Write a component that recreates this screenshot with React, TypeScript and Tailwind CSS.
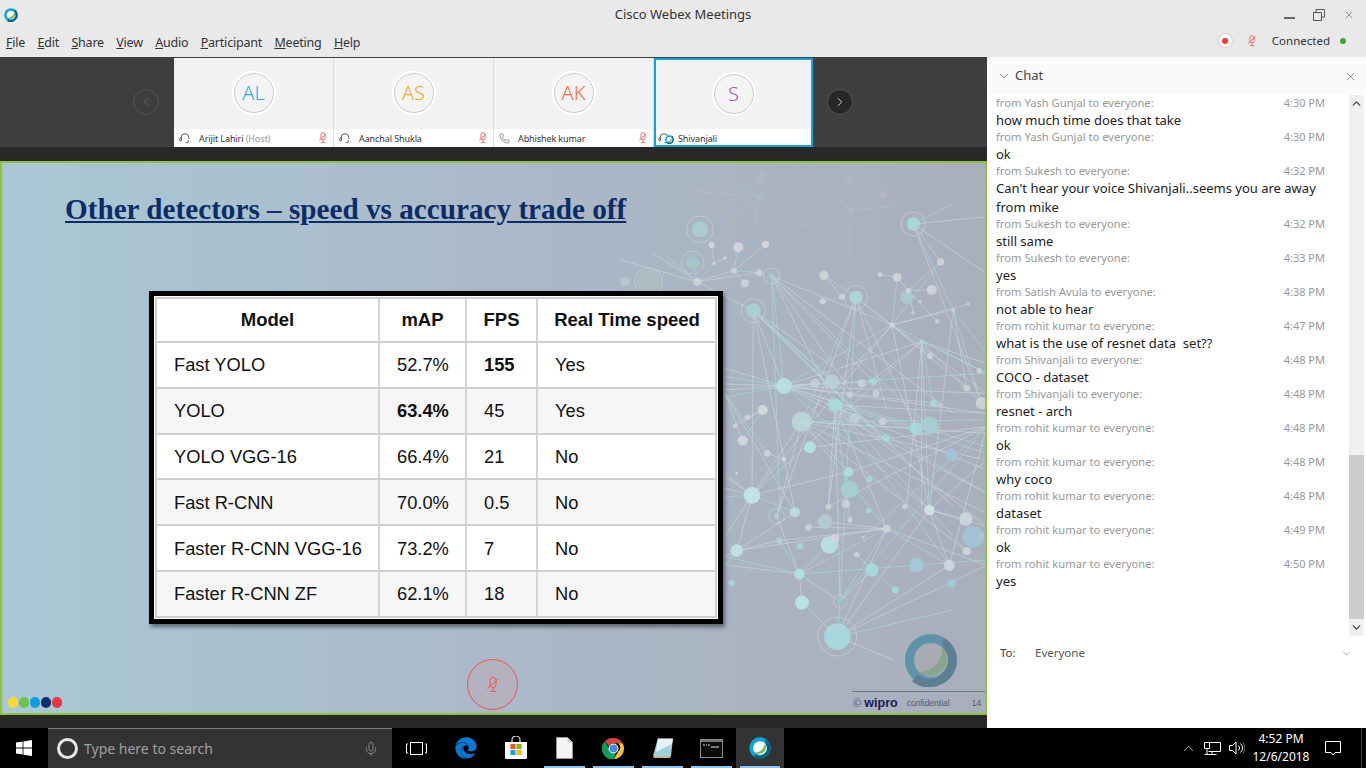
import React from "react";
import { ChevronDown, ChevronUp, ChevronLeft, ChevronRight, X, Phone, Mic } from "lucide-react";
import { FaEdge } from "react-icons/fa";

const FONT = "font-['Noto_Sans','Open_Sans',sans-serif]";

const MutedMic = ({ className = "" }: { className?: string }) => (
  <svg viewBox="0 0 14 18" fill="none" stroke="currentColor" strokeWidth="1" className={className}>
    <rect x="4" y="1.5" width="6" height="10" rx="3" />
    <path d="M7 11.5v3.5M4 15.5h6M1.5 12.5 12 3" />
  </svg>
);

const Headset = ({ className = "" }: { className?: string }) => (
  <svg viewBox="0 0 14 14" fill="none" stroke="#444" strokeWidth="1" className={className}>
    <path d="M2.5 8V6.5a4.5 4.5 0 0 1 9 0V8" />
    <rect x="1" y="6.5" width="2" height="4" rx="1" />
    <path d="M11 9.5v1a2 2 0 0 1-2 2H7.5" />
  </svg>
);

const WebexLogo = ({ size = 16 }: { size?: number }) => (
  <svg width={size} height={size} viewBox="0 0 32 32">
    <circle cx="16" cy="16" r="15.5" fill="#07a6d8" />
    <path d="M24 3a15.5 15.5 0 0 1 0 26 15.5 15.5 0 0 1-17 1l3-5a10 10 0 0 0 14-14z" fill="#0a5f7e" />
    <circle cx="16" cy="16" r="10" fill="#fff" />
    <path d="M23 9a10 10 0 0 1-15 13C15 23 22 18 23 9z" fill="#6fbf4b" />
  </svg>
);

const fans: [number, number, [number, number][]][] = [
  [455, 348, [[492, 678], [645, 735], [760, 665], [480, 1060], [816, 495], [700, 705], [905, 780], [1000, 760]]],
  [400, 452, [[492, 678], [636, 665], [690, 705], [525, 1057], [396, 1006], [800, 850], [640, 620], [1000, 1040], [860, 900]]],
  [492, 678, [[315, 625], [315, 650], [315, 672], [315, 690], [315, 712], [585, 670], [760, 665], [1100, 640], [1100, 700], [942, 730], [1100, 860], [888, 805], [1100, 1000], [928, 1050], [1100, 760], [1100, 930]]],
  [708, 412, [[545, 785], [470, 1068], [816, 495], [930, 588], [800, 750], [888, 805], [660, 1325], [625, 1040]]],
  [545, 785, [[396, 1006], [470, 1068], [1100, 780], [1100, 900], [1040, 1174], [888, 805], [1100, 820], [1100, 1060], [800, 1106], [686, 936]]],
  [905, 545, [[905, 1050], [928, 1050], [860, 1040], [700, 705], [1100, 640], [492, 678], [396, 1006], [940, 730], [1100, 610], [1085, 730]]],
  [645, 735, [[1100, 1000], [1100, 1100], [928, 1050], [988, 1216], [625, 1040], [660, 1325], [1100, 880], [800, 1106], [1100, 760], [690, 1080]]],
  [816, 495, [[1000, 450], [1045, 432], [492, 678], [396, 1006], [545, 785], [962, 305], [928, 1050], [1100, 700], [1100, 640], [1040, 685]]],
  [880, 192, [[962, 305], [1000, 450], [1085, 730], [1100, 340], [1000, 130], [1100, 170]]],
  [1000, 450, [[1085, 730], [1040, 685], [928, 1050], [1100, 580]]],
  [396, 1006, [[315, 950], [315, 985], [315, 1010], [315, 1130], [350, 1172], [525, 1057], [686, 936], [315, 940]]],
  [1100, 800, [[686, 936], [660, 1325], [988, 1216], [570, 862], [730, 1132], [625, 1040]]],
  [800, 1106, [[988, 1216], [566, 1102], [478, 1142], [660, 1325], [350, 1172], [1100, 1216], [538, 1242], [615, 1085]]],
  [350, 1172, [[478, 1142], [525, 1057], [315, 1215], [315, 1190]]],
  [538, 1242, [[315, 1215], [478, 1142], [546, 1328], [628, 1155], [1100, 1200], [660, 1325], [470, 1068], [315, 1190]]],
  [652, 1430, [[660, 1325], [800, 1106], [988, 1216], [546, 1328], [1100, 1216], [928, 1050], [1000, 1350], [820, 1500]]],
  [928, 1050, [[1038, 1077], [988, 1216], [1040, 1174], [1100, 1100], [1100, 900]]],
  [232, 365, [[342, 332], [282, 310], [418, 338], [100, 280], [218, 308], [400, 452], [0, 300], [140, 290]]],
  [342, 332, [[355, 262], [437, 253], [375, 370], [418, 338]]],
  [282, 310, [[275, 255], [315, 294]]],
  [428, 750, [[382, 772], [368, 842], [345, 798]]],
  [315, 700, [[442, 880], [525, 1057], [368, 842]]],
  [442, 880, [[492, 898]]],
  [612, 346, [[666, 410], [708, 412]]],
  [608, 424, [[666, 410]]],
  [832, 352, [[780, 344], [865, 392], [816, 495]]],
  [865, 392, [[935, 390], [962, 305], [880, 458], [952, 484]]],
  [756, 1230, [[826, 1290], [660, 1325], [710, 1184]]],
  [690, 150, [[690, 300], [640, 120], [740, 110], [760, 250], [600, 50], [790, 105], [830, 140]]],
  [420, 110, [[335, 170], [240, 40], [420, 50], [235, 95], [550, 195], [405, 180]]],
];

const nodes: [number, number, number, string, number?][] = [
  [492, 678, 24, "#b9e3e3"], [545, 785, 30, "#bcd8d8"], [396, 1006, 25, "#c4e8e9"], [688, 988, 26, "#a4cfd1"], [652, 1430, 40, "#a9dbdf", 58],
  [880, 192, 20, "#a9dbdd", 36], [708, 412, 20, "#aed8d6", 35], [400, 452, 22, "#aad3d2", 36], [240, 208, 24, "#aacfd0", 40], [218, 308, 20, "#a6c9c6", 34],
  [455, 348, 9, "#a7ccd2", 24], [636, 665, 22, "#bcd2d4"], [570, 862, 18, "#b4e6e4"], [888, 805, 20, "#a6dadd"], [930, 795, 25, "#a4cfd6"],
  [686, 936, 14, "#aee0e0"], [928, 1050, 16, "#cfe6e6"], [1038, 1077, 20, "#ccdadf"], [988, 1216, 17, "#ced8df"], [628, 1155, 26, "#b8e4e4"],
  [756, 1230, 20, "#a5dde0"], [546, 1328, 21, "#bbe8e8"], [538, 1242, 16, "#b4e3e3"], [525, 1057, 15, "#bde2df"], [350, 1172, 19, "#c0e6e5"],
  [478, 1142, 9, "#a8d6d6"], [540, 1158, 10, "#a8d6d6"], [660, 1325, 9, "#90c8cc", 20], [826, 1290, 10, "#a8dcdc"], [710, 1184, 8, "#c6d6db"],
  [800, 1106, 12, "#cfd6dc"], [1040, 1174, 12, "#cfd8de"], [1085, 1128, 8, "#cfe8f2"], [905, 545, 7, "#a0dee0"], [930, 588, 9, "#cfd3d8"],
  [1085, 730, 18, "#d0d6da"], [1040, 685, 10, "#cbd3d8"], [1078, 632, 8, "#cfd3d8"], [1000, 450, 6, "#ccd0d5"], [1045, 432, 5, "#ccd0d5"],
  [952, 484, 7, "#ccd0d5"], [880, 458, 6, "#ccd0d5"], [900, 425, 5, "#ccd0d5"], [935, 390, 15, "#d2d6da"], [962, 305, 11, "#d2d6da"],
  [860, 412, 20, "#a4ced4"], [865, 392, 8, "#d2d6da"], [832, 352, 13, "#d2d6da"], [780, 344, 7, "#d2d6da"], [612, 346, 14, "#d2d6da"],
  [666, 410, 9, "#d2d6da"], [608, 424, 9, "#d2d6da"], [816, 495, 8, "#d2d6da"], [760, 665, 11, "#a4dcdd"], [725, 670, 12, "#c8d4d8"],
  [690, 705, 9, "#c8d4d8"], [645, 735, 20, "#a8dcdc"], [585, 670, 14, "#c2d0d4"], [705, 775, 15, "#c2d0d4"], [768, 700, 10, "#c8d4d8"],
  [788, 785, 11, "#c8d4d8"], [942, 730, 11, "#a2dcdc"], [960, 735, 6, "#ccd0d5"], [798, 834, 11, "#a2dcdc"], [748, 958, 9, "#a2dcdc"],
  [678, 1032, 12, "#ccd4d8"], [625, 1040, 9, "#ccd4d8"], [615, 1085, 22, "#b0cdd0"], [470, 1068, 8, "#b8cfd2", 23], [690, 1080, 8, "#ccd4d8"],
  [746, 1052, 8, "#aadcdc"], [566, 1102, 10, "#ccd4d8"], [645, 1135, 13, "#d6d6dc"], [730, 1132, 4, "#ccd4d8"], [855, 1040, 8, "#ccd4d8"],
  [428, 750, 15, "#d6d9dd"], [382, 772, 8, "#d0d4d8"], [345, 798, 7, "#d0d4d8"], [368, 842, 15, "#d6d9dd"], [442, 880, 10, "#d0d4d8"],
  [492, 898, 7, "#d6d9dd"], [350, 940, 4, "#d6d9dd"], [355, 262, 15, "#d6d9dd"], [437, 253, 11, "#d6d9dd"], [275, 255, 9, "#d6d9dd"],
  [315, 294, 5, "#d6d9dd"], [342, 332, 9, "#d0d4d8"], [282, 310, 5, "#d0d4d8"], [232, 365, 12, "#d0d4d8"], [418, 338, 10, "#d0d4d8"],
  [375, 370, 12, "#d0d4d8"], [15, 365, 15, "#b8c6ca"], [85, 365, 35, "#aebfc2", 42], [995, 885, 20, "#a2c4d6"], [1060, 1130, 32, "#a0c6da"],
  [890, 1215, 22, "#a0ccd8"], [995, 1270, 13, "#a2c8da"], [335, 1270, 9, "#a6dce0"],
  [420, 50, 13, "#b2b6c0"], [235, 95, 11, "#b2b6c0"], [335, 170, 20, "#afb3bc"], [690, 58, 14, "#b0b4be"], [790, 105, 12, "#b2b6c0"], [405, 180, 9, "#b2b6c0"], [550, 195, 8, "#b2b6c0"],
];

const NetworkDrawing = () => (
  <svg viewBox="2 163 983 550" className="absolute inset-0 w-full h-full blur-[0.35px]" aria-hidden="true">
    <g transform="translate(620 160) scale(0.3333)">
      {fans.map(([x, y, ts], i) =>
        ts.map(([a, b], j) => (
          <line key={`${i}-${j}`} x1={x} y1={y} x2={a} y2={b} stroke={(i + j) % 3 === 0 ? "#a9e0e2" : "#d3dbe0"} strokeWidth="2.6" opacity={y < 200 && x < 800 ? 0.25 : 0.65} />
        ))
      )}
      {nodes.map(([x, y, r, c, ring], i) => (
        <g key={i}>
          {ring ? <circle cx={x} cy={y} r={ring} fill="none" stroke="#c9dadd" strokeWidth="2.5" opacity="0.7" /> : null}
          <circle cx={x} cy={y} r={r} fill={c} opacity="0.88" />
        </g>
      ))}
    </g>
  </svg>
);

const rows = [
  ["Fast YOLO", "52.7%", "155", "Yes", false, true],
  ["YOLO", "63.4%", "45", "Yes", true, false],
  ["YOLO VGG-16", "66.4%", "21", "No", false, false],
  ["Fast R-CNN", "70.0%", "0.5", "No", false, false],
  ["Faster R-CNN VGG-16", "73.2%", "7", "No", false, false],
  ["Faster R-CNN ZF", "62.1%", "18", "No", false, false],
] as const;

const DataTable = () => (
  <div className="w-[574px] h-[333px] bg-white border-[5px] border-black p-px shadow-[2px_3px_4px_rgba(0,0,0,0.45)] font-['Liberation_Sans',Arial,sans-serif] text-[#111]">
    <div className="h-full border-2 border-[#cfcfcf] flex flex-col">
      <div className="h-[44px] shrink-0 flex items-center bg-white font-bold text-[18.5px] border-b-2 border-[#cfcfcf]">
        <div className="w-[223px] text-center h-full flex items-center justify-center border-r-2 border-[#d4d4d4]">Model</div>
        <div className="w-[87px] text-center h-full flex items-center justify-center border-r-2 border-[#d4d4d4]">mAP</div>
        <div className="w-[71px] text-center h-full flex items-center justify-center border-r-2 border-[#d4d4d4]">FPS</div>
        <div className="flex-1 text-center pl-px">Real Time speed</div>
      </div>
      {rows.map((r, i) => (
        <div key={r[0]} className={`flex-1 flex items-center text-[18.3px] whitespace-nowrap ${i % 2 === 1 ? "bg-[#f6f6f6]" : "bg-white"} ${i < 5 ? "border-b-2 border-[#cfcfcf]" : ""}`}>
          <div className="w-[223px] pl-[17px] h-full flex items-center border-r-2 border-[#d4d4d4]">{r[0]}</div>
          <div className={`w-[87px] pl-[17px] h-full flex items-center border-r-2 border-[#d4d4d4] ${r[4] ? "font-bold" : ""}`}>{r[1]}</div>
          <div className={`w-[71px] pl-[17px] h-full flex items-center border-r-2 border-[#d4d4d4] ${r[5] ? "font-bold" : ""}`}>{r[2]}</div>
          <div className="flex-1 pl-[17px]">{r[3]}</div>
        </div>
      ))}
    </div>
  </div>
);

const people = [
  { i: "AL", c: "text-[#35a7e0]", n: "Arijit Lahiri", h: true, mic: true, phone: false },
  { i: "AS", c: "text-[#f5ac2f]", n: "Aanchal Shukla", h: false, mic: true, phone: false },
  { i: "AK", c: "text-[#f4703c]", n: "Abhishek kumar", h: false, mic: true, phone: true },
  { i: "S", c: "text-[#a45bb0]", n: "Shivanjali", h: false, mic: false, phone: false },
];

const Thumb = ({ p, sel }: { p: (typeof people)[number]; sel: boolean }) => (
  <div className={`w-[159px] h-[89px] shrink-0 flex flex-col bg-white ${sel ? "border-2 border-[#14a3dd]" : ""}`}>
    <div className="flex-1 bg-[#f2f2f2] flex items-center justify-center">
      <div className="w-[40px] h-[40px] -mt-[1px] rounded-full bg-[#f4f4f4] border-[1.5px] border-[#c8c8c8] outline-2 outline-white flex items-center justify-center">
        <span className={`text-[20px] leading-none font-light ${p.c}`}>{p.i}</span>
      </div>
    </div>
    <div className={`${sel ? "h-[16px] pl-[2px] pt-[2px]" : "h-[18px] pl-[5px]"} shrink-0 flex items-center relative`}>
      {p.phone ? <Phone size={11} strokeWidth={1.2} className="text-[#444] mt-px" /> : <Headset className="w-[12px] h-[12px]" />}
      {sel ? <span className="absolute left-[9px] top-[6px]"><WebexLogo size={9} /></span> : null}
      <span className="ml-[8px] text-[9px] leading-none text-[#333] tracking-[-0.1px]">
        {p.n} {p.h ? <span className="text-[#999]">(Host)</span> : null}
      </span>
      {p.mic ? <MutedMic className="absolute right-[5px] top-[2px] w-[10px] h-[14px] text-[#f03b3b]" /> : null}
    </div>
  </div>
);

const chat: [string, string, string[]][] = [
  ["Yash Gunjal", "4:30 PM", ["how much time does that take"]],
  ["Yash Gunjal", "4:30 PM", ["ok"]],
  ["Sukesh", "4:32 PM", ["Can't hear your voice Shivanjali..seems you are away", "from mike"]],
  ["Sukesh", "4:32 PM", ["still same"]],
  ["Sukesh", "4:33 PM", ["yes"]],
  ["Satish Avula", "4:38 PM", ["not able to hear"]],
  ["rohit kumar", "4:47 PM", ["what is the use of resnet data  set??"]],
  ["Shivanjali", "4:48 PM", ["COCO - dataset"]],
  ["Shivanjali", "4:48 PM", ["resnet - arch"]],
  ["rohit kumar", "4:48 PM", ["ok"]],
  ["rohit kumar", "4:48 PM", ["why coco"]],
  ["rohit kumar", "4:48 PM", ["dataset"]],
  ["rohit kumar", "4:49 PM", ["ok"]],
  ["rohit kumar", "4:50 PM", ["yes"]],
];

const ChatPanel = () => (
  <div className="flex-1 min-w-0 bg-white flex flex-col">
    <div className="h-[37px] shrink-0 bg-[#fafafa] flex items-center pl-[10px] pr-[9px] pt-px">
      <ChevronDown size={14} strokeWidth={1.3} className="text-[#555]" />
      <span className="ml-[4px] text-[13px] text-[#444]">Chat</span>
      <X size={13} strokeWidth={1.2} className="ml-auto text-[#555]" />
    </div>
    <div className="h-[542px] shrink-0 flex pt-px">
      <div className="flex-1 min-w-0 pl-[9px] pr-[24px] pt-px">
        {chat.map(([who, t, lines], i) => (
          <div key={i}>
            <div className="h-[17px] pb-[2px] flex justify-between items-center text-[11.2px] text-[#999]">
              <span>from {who} to everyone:</span>
              <span className="text-[11px]">{t}</span>
            </div>
            {lines.map((l, j) => (
              <div key={j} className={`h-[17px] pb-[2px] ${j === 0 && lines.length > 1 ? "mb-[2px]" : ""} flex items-center text-[13px] text-[#222] whitespace-pre`}>{l}</div>
            ))}
          </div>
        ))}
      </div>
      <div className="w-[15px] mr-[2px] h-[541px] bg-[#f0f0f0] flex flex-col">
        <div className="h-[16px] flex items-center justify-center"><ChevronUp size={13} strokeWidth={2.5} className="text-[#444]" /></div>
        <div className="h-[344px]" />
        <div className="flex-1 bg-[#cdcdcd]" />
        <div className="h-[17px] flex items-center justify-center"><ChevronDown size={13} strokeWidth={2.5} className="text-[#444]" /></div>
      </div>
    </div>
    <div className="h-[34px] shrink-0 flex items-center pl-[13px] pr-[13px] text-[11.5px] text-[#444]">
      <span className="w-[35px]">To:</span>
      <span className="text-[#555]">Everyone</span>
      <ChevronDown size={13} strokeWidth={1} className="ml-auto text-[#666]" />
    </div>
    <div className="flex-1" />
  </div>
);

const menu = ["File", "Edit", "Share", "View", "Audio", "Participant", "Meeting", "Help"];

const TitleBar = () => (
  <div className="h-[57px] shrink-0 bg-[#e9e9e9] flex flex-col relative">
    <div className="h-[29px] flex items-center">
      <div className="w-[100px] pl-[4px]"><WebexLogo size={14} /></div>
      <div className="flex-1 text-center text-[13px] text-[#333]">Cisco Webex Meetings</div>
      <div className="w-[100px] flex items-center justify-end gap-[18px] pr-[11px] text-[#555]">
        <div className="w-[11px] h-[2px] mt-[7px] bg-[#666]" />
        <svg width="12" height="12" viewBox="0 0 12 12" fill="none" stroke="currentColor"><path d="M.5 3.500h8v8h-8zM3 3V.5h8.500V8H9" /></svg>
        <X size={12} strokeWidth={1.2} />
      </div>
    </div>
    <div className="flex-1 flex items-center pl-[6px] pr-[20px]">
      <div className="flex gap-[12.3px] text-[12.5px] tracking-[-0.2px] text-[#333]">
        {menu.map((m) => (
          <span key={m}><span className="underline">{m[0]}</span>{m.slice(1)}</span>
        ))}
      </div>
      <div className="ml-auto flex items-center -mt-[5px]">
        <div className="w-[13px] h-[13px] rounded-full bg-white flex items-center justify-center shadow-[0_0_2px_rgba(0,0,0,0.25)]"><div className="w-[6px] h-[6px] rounded-full bg-[#f33]" /></div>
        <MutedMic className="ml-[15px] w-[10px] h-[14px] text-[#f03b3b]" />
        <span className="ml-[15px] text-[11.5px] text-[#333]">Connected</span>
        <div className="ml-[10px] w-[6px] h-[6px] rounded-full bg-[#3fa33f]" />
      </div>
    </div>
  </div>
);

const ThumbStrip = () => (
  <div className="h-[90px] shrink-0 bg-[#3e3e3e] flex items-start pl-[133px]">
    <div className="w-[26px] h-[26px] mt-[32px] rounded-full border border-[#555] bg-[#3e3e3e] flex items-center justify-center shrink-0">
      <ChevronLeft size={14} strokeWidth={1.2} className="text-[#777]" />
    </div>
    <div className="ml-[15px] h-[89px] mt-px flex gap-[1px] bg-[#dedede] overflow-hidden">
      <Thumb p={people[0]} sel={false} />
      <Thumb p={people[1]} sel={false} />
      <Thumb p={people[2]} sel={false} />
      <Thumb p={people[3]} sel={true} />
    </div>
    <div className="w-[26px] h-[26px] mt-[32px] ml-[14px] rounded-full border border-[#555] bg-[#282828] flex items-center justify-center shrink-0">
      <ChevronRight size={14} strokeWidth={1.4} className="text-[#eee]" />
    </div>
  </div>
);

const Slide = () => (
  <div className="h-[554px] shrink-0 relative overflow-hidden border-2 border-[#8fc33a] bg-gradient-to-r from-[#a9c8d5] via-[#abb9c9] via-50% to-[#a9aebc]">
    <NetworkDrawing />
    <div className="relative pt-[28px] pl-[63px]">
      <h1 className="font-['Liberation_Serif',serif] font-bold text-[29.2px] leading-[36px] text-[#0c2c66] underline whitespace-nowrap">Other detectors – speed vs accuracy trade off</h1>
    </div>
    <div className="relative mt-[64px] ml-[147px]">
      <DataTable />
    </div>
    <div className="absolute left-[465px] top-[496px] w-[51px] h-[51px] rounded-full border border-[#ef5350] bg-[#e88]/15 flex items-center justify-center">
      <MutedMic className="w-[14px] h-[20px] text-[#ef5350]" />
    </div>
    <div className="absolute left-[6px] bottom-[5px] flex gap-[1px]">
      {["bg-[#ffd92f]", "bg-[#6cc24a]", "bg-[#0d9fe0]", "bg-[#082f70]", "bg-[#ef3340]"].map((c) => (
        <div key={c} className={`w-[10px] h-[11px] rounded-full ${c}`} />
      ))}
    </div>
    <div className="absolute left-[902px] top-[470px] opacity-90">
      <svg width="54" height="54" viewBox="0 0 54 54">
        <circle cx="27" cy="27" r="26" fill="#5790a8" />
        <path d="M40 5a26 26 0 0 1-2 46 26 26 0 0 1-30-3l6-6a17 17 0 0 0 24-24z" fill="#557a90" />
        <circle cx="27" cy="27" r="17" fill="#a9abb2" />
        <path d="M38 14a17 17 0 0 1-23 25c12 0 24-10 23-25z" fill="#86a58a" />
      </svg>
    </div>
    <div className="absolute left-[850px] right-0 top-[528px] border-t border-[#6f7386] h-[20px] flex items-center text-[#555a6b] pt-[3px]">
      <span className="text-[10px] ml-px">©</span>
      <span className="ml-[3px] text-[12.5px] font-bold text-[#1d1a55] font-['Liberation_Sans',sans-serif] leading-none">wipro</span>
      <span className="ml-[9px] text-[8.5px] font-['Liberation_Sans',sans-serif]">confidential</span>
      <span className="ml-[22px] text-[8.5px] font-['Liberation_Sans',sans-serif]">14</span>
    </div>
  </div>
);

const Store = () => (
  <svg width="24" height="24" viewBox="0 0 24 24">
    <path d="M8 6V4a4 4 0 0 1 8 0v2" fill="none" stroke="#ddd" strokeWidth="1.2" />
    <path d="M1 6h22v16a1 1 0 0 1-1 1H2a1 1 0 0 1-1-1z" fill="#fff" />
    <rect x="6.5" y="8" width="5" height="5" fill="#f25022" /><rect x="12.5" y="8" width="5" height="5" fill="#7fba00" />
    <rect x="6.5" y="14" width="5" height="5" fill="#00a4ef" /><rect x="12.5" y="14" width="5" height="5" fill="#ffb900" />
  </svg>
);

const Chrome = () => (
  <svg width="23" height="23" viewBox="0 0 24 24">
    <path d="M12 1a11 11 0 0 1 9.500 5.500H12a5.500 5.500 0 0 0-5 3L3 4.500A11 11 0 0 1 12 1z" fill="#db4437" />
    <path d="M21.500 6.500A11 11 0 0 1 12.500 23l4.200-7.500a5.500 5.500 0 0 0 0-9z" fill="#fbc02d" />
    <path d="M3 4.500l4.600 8a5.500 5.500 0 0 0 7 3L12.500 23A11 11 0 0 1 3 4.500z" fill="#0f9d58" />
    <circle cx="12" cy="12" r="5.2" fill="#fff" /><circle cx="12" cy="12" r="4.2" fill="#4285f4" />
  </svg>
);

const Notepad = () => (
  <svg width="24" height="24" viewBox="0 0 24 24">
    <path d="M7 2h15l-2 18H2z" fill="#9fd0de" />
    <path d="M7 2h15l-1 6-16 8z" fill="#e6f3f6" />
    <path d="M2 20h18l-1 2H3z" fill="#c9b98a" />
    <path d="M7 2h15v1H7z" fill="#888" />
  </svg>
);

const Cmd = () => (
  <svg width="23" height="19" viewBox="0 0 23 19">
    <rect x=".5" y=".5" width="22" height="18" fill="#0c0c0c" stroke="#8a8a8a" />
    <rect x="1" y="1" width="21" height="2" fill="#777" />
    <path d="M3 6h2M6 6h1M8 6h2M11 8h8" stroke="#ddd" fill="none" />
  </svg>
);

const Doc = () => (
  <svg width="17" height="22" viewBox="0 0 17 22">
    <path d="M.5.5h11l5 5v16H.5z" fill="#f4f4f4" stroke="#bbb" strokeWidth=".5" />
    <path d="M11.500.5v5h5z" fill="#cfcfcf" />
  </svg>
);

const Cell = ({ w, children, run, active }: { w: string; children: React.ReactNode; run?: boolean; active?: boolean }) => (
  <div className={`${w} h-full relative flex items-center justify-center shrink-0 ${active ? "bg-[#333]" : ""}`}>
    {children}
    {run ? <div className="absolute bottom-0 left-0 right-0 h-[2px] bg-[#8cc6ee] mx-[4px]" /> : null}
  </div>
);

const Taskbar = () => (
  <div className="h-[40px] shrink-0 bg-black flex items-center text-white font-['Noto_Sans',sans-serif]">
    <div className="w-[48px] flex justify-center">
      <svg width="16" height="16" viewBox="0 0 16 16" fill="#fff"><path d="M0 2.400 6.600 1.500v6H0zM7.400 1.400 16 0v7.500H7.400zM0 8.400h6.600v6.100L0 13.600zM7.400 8.400H16V16l-8.600-1.300z" /></svg>
    </div>
    <div className="w-[344px] h-full bg-[#333] border-t border-[#7a7a7a] flex items-center pl-[9px] pr-[13px]">
      <div className="w-[21px] h-[21px] rounded-full border-[3px] border-[#e6e6e6]" />
      <span className="ml-[6px] text-[14px] text-[#a0a0a0]">Type here to search</span>
      <Mic size={16} strokeWidth={1} className="ml-auto text-[#aaa]" />
    </div>
    <div className="h-full flex items-center">
      <Cell w="w-[48px]">
        <svg width="21" height="13" viewBox="0 0 21 13" fill="none" stroke="#fff"><rect x="4.500" y=".5" width="12" height="12" /><path d="M2 2H.5v9H2M19 2h1.500v9H19" /></svg>
      </Cell>
      <Cell w="w-[51px]"><FaEdge size={22} className="text-[#0a78d7]" /></Cell>
      <Cell w="w-[49px]"><Store /></Cell>
      <Cell w="w-[49px]" run><Doc /></Cell>
      <Cell w="w-[49px]" run><Chrome /></Cell>
      <Cell w="w-[49px]" run><Notepad /></Cell>
      <Cell w="w-[49px]" run><Cmd /></Cell>
      <Cell w="w-[48px]" active run><WebexLogo size={22} /></Cell>
    </div>
    <div className="ml-auto flex items-center h-full pr-[4px]">
      <ChevronUp size={17} strokeWidth={1} />
      <svg className="ml-[7px]" width="17" height="15" viewBox="0 0 17 15" fill="none" stroke="#fff"><path d="M4.500 1.500h12v9h-12M.5 1.500h5v6h-5zM3 7.500V14M.5 13.500h12M8 10.500v3" /></svg>
      <svg className="ml-[8px]" width="16" height="14" viewBox="0 0 16 14" fill="none" stroke="#fff"><path d="M.5 4.500h3L7 1v12L3.500 9.500h-3zM9.500 4.500a3.500 3.500 0 0 1 0 5M11.500 2.500a6 6 0 0 1 0 9" /><path d="M13.500 1a9 9 0 0 1 0 12" opacity=".4" /></svg>
      <div className="w-[72px] text-center text-[12px] leading-[18px]">
        <div>4:52 PM</div>
        <div>12/6/2018</div>
      </div>
      <svg className="ml-[8px]" width="16" height="15" viewBox="0 0 16 15" fill="none" stroke="#fff"><path d="M.5.5h15v11H10l-2 2.500-2-2.500H.5z" /></svg>
      <div className="ml-[20px] w-px h-full bg-[#444]" />
    </div>
  </div>
);

export default function App() {
  return (
    <div className={`w-[1366px] h-[768px] overflow-hidden flex flex-col bg-white ${FONT}`}>
      <TitleBar />
      <div className="flex-1 min-h-0 flex">
        <div className="w-[987px] shrink-0 flex flex-col bg-[#282828]">
          <ThumbStrip />
          <div className="h-[14px] shrink-0" />
          <Slide />
        </div>
        <ChatPanel />
      </div>
      <Taskbar />
    </div>
  );
}
